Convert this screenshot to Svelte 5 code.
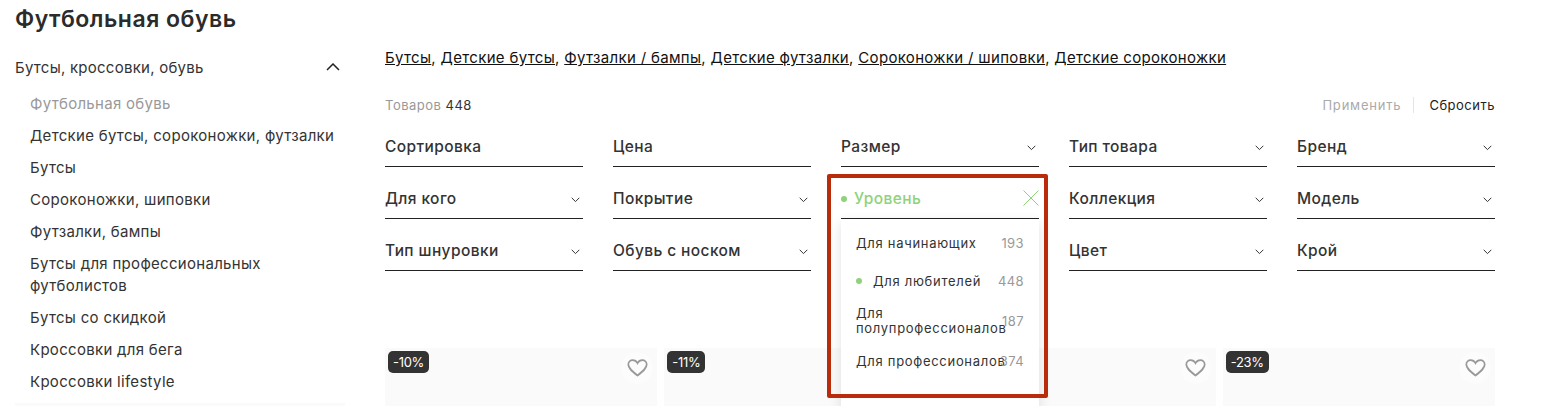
<script>
  const categories = [
    'Детские бутсы, сороконожки, футзалки',
    'Бутсы',
    'Сороконожки, шиповки',
    'Футзалки, бампы',
    'Бутсы для профессиональных футболистов',
    'Бутсы со скидкой',
    'Кроссовки для бега',
    'Кроссовки lifestyle'
  ];
  const links = ['Бутсы', 'Детские бутсы', 'Футзалки / бампы', 'Детские футзалки', 'Сороконожки / шиповки', 'Детские сороконожки'];
  const filters = [
    { name: 'Сортировка', noArrow: true },
    { name: 'Цена', noArrow: true },
    { name: 'Размер' },
    { name: 'Тип товара' },
    { name: 'Бренд' },
    { name: 'Для кого' },
    { name: 'Покрытие' },
    { name: 'Уровень', open: true },
    { name: 'Коллекция' },
    { name: 'Модель' },
    { name: 'Тип шнуровки' },
    { name: 'Обувь с носком' },
    { name: '', blank: true },
    { name: 'Цвет' },
    { name: 'Крой' }
  ];
  const levels = [
    { name: 'Для начинающих', count: 193 },
    { name: 'Для любителей', count: 448, active: true },
    { name: 'Для полупрофессионалов', count: 187 },
    { name: 'Для профессионалов', count: 374 }
  ];
  const products = ['-10%', '-11%', '', '-23%'];
</script>

<div class="page">
  <h1>Футбольная обувь</h1>
  <div class="layout">
    <aside class="sidebar">
      <div class="group-title">
        <span>Бутсы, кроссовки, обувь</span>
        <svg width="14" height="8" viewBox="0 0 14 8"><path d="M1 7l6-6 6 6" fill="none" stroke="#222" stroke-width="1.5" /></svg>
      </div>
      <ul>
        <li class="current">Футбольная обувь</li>
        {#each categories as cat}
          <li>{cat}</li>
        {/each}
      </ul>
      <div class="side-line"></div>
    </aside>

    <main class="main">
      <div class="links">
        {#each links as link, i}
          <span><u>{link}</u>{i < links.length - 1 ? ', ' : ''}</span>
        {/each}
      </div>

      <div class="toolbar">
        <div class="count">Товаров <b>448</b></div>
        <div class="actions">
          <span class="apply">Применить</span>
          <span class="reset">Сбросить</span>
        </div>
      </div>

      <div class="filters">
        {#each filters as f}
          {#if f.blank}
            <div></div>
          {:else}
            <div class="filter" class:open={f.open}>
              {#if f.open}<i class="dot"></i>{/if}
              <span class="filter-name">{f.name}</span>
              {#if f.open}
                <svg class="close" width="16" height="16" viewBox="0 0 16 16"><path d="M.5.5l15 15M15.500.5l-15 15" fill="none" stroke="#8fd27a" stroke-width="1" /></svg>
                <div class="dropdown">
                  {#each levels as l}
                    <div class="level">
                      {#if l.active}<i class="dot level-dot"></i>{/if}
                      <span class="level-name">{l.name}</span>
                      <span class="level-count">{l.count}</span>
                    </div>
                  {/each}
                </div>
              {:else if !f.noArrow}
                <svg class="arrow" width="9" height="6" viewBox="0 0 9 6"><path d="M.7.8l3.800 3.800L8.300.8" fill="none" stroke="#333" stroke-width="1" /></svg>
              {/if}
            </div>
          {/if}
        {/each}
      </div>

      <div class="products">
        {#each products as sale}
          <div class="product">
            {#if sale}<span class="badge">{sale}</span>{/if}
            <span class="fav">
              <svg width="21" height="18" viewBox="0 0 21 18"><path d="M10.500 16.500C4.500 11.800 1.300 9 1.300 5.600 1.300 3 3.300 1.200 5.700 1.200c2 0 3.700 1 4.800 3 1.100-2 2.800-3 4.800-3 2.400 0 4.400 1.800 4.400 4.400 0 3.400-3.200 6.200-9.200 10.900z" fill="none" stroke="#999" stroke-width="1.700" /></svg>
            </span>
          </div>
        {/each}
      </div>
    </main>
  </div>
  <div class="highlight"></div>
</div>

<style>
  :global(body) {
    margin: 0;
    background: #fff;
  }

  .page {
    position: relative;
    height: 406px;
    overflow: hidden;
    font-family: Inter, "Noto Sans", sans-serif;
    color: #222;
  }

  h1 {
    margin: 0;
    padding: 7px 0 0 15px;
    font-size: 23px;
    line-height: 24px;
    font-weight: 600;
    letter-spacing: 0.5px;
    color: #2b2b2b;
  }

  .layout {
    display: flex;
    padding: 0 70px 0 15px;
    gap: 40px;
  }

  .sidebar {
    width: 330px;
    flex: none;
    padding-top: 26px;
  }

  .group-title {
    display: flex;
    justify-content: space-between;
    align-items: center;
    padding-right: 5px;
    height: 20px;
    font-size: 15px;
    letter-spacing: 0.25px;
    color: #333;
  }

  ul {
    list-style: none;
    margin: 16px 0 0;
    padding: 0 0 0 15px;
  }

  li {
    font-size: 15px;
    letter-spacing: 0.3px;
    line-height: 22px;
    margin-bottom: 10px;
    color: #333;
  }

  li.current {
    color: #999;
  }

  .side-line {
    height: 4px;
    background: #fafafa;
  }

  .main {
    flex: 1;
    min-width: 0;
    padding-top: 17px;
  }

  .links {
    font-size: 15px;
    letter-spacing: 0.33px;
    line-height: 20px;
    color: #111;
  }

  .toolbar {
    display: flex;
    justify-content: space-between;
    align-items: center;
    margin-top: 27px;
    height: 20px;
    font-size: 13px;
    letter-spacing: 0.5px;
  }

  .count {
    color: #999;
  }

  .count b {
    font-weight: 400;
    color: #333;
  }

  .actions {
    display: flex;
    align-items: center;
  }

  .apply {
    color: #aaa;
    letter-spacing: 0.8px;
    padding-right: 12px;
    border-right: 1px solid #e5e5e5;
    margin-right: 15px;
  }

  .filters {
    display: grid;
    grid-template-columns: repeat(5, 1fr);
    column-gap: 30px;
    margin-top: 1px;
  }

  .filter {
    position: relative;
    display: flex;
    align-items: flex-end;
    height: 51px;
    box-sizing: border-box;
    margin-bottom: 1px;
    border-bottom: 1px solid #222;
    font-size: 15.500px;
    letter-spacing: 0.4px;
    font-weight: 500;
    color: #333;
  }

  .filter-name {
    flex: 1;
    line-height: 20px;
    padding-bottom: 9px;
  }

  .arrow {
    margin: 0 3px 15px 0;
  }

  .open {
    color: #8fd27a;
  }

  .dot {
    width: 6px;
    height: 6px;
    border-radius: 50%;
    background: #8fd27a;
    flex: none;
    margin-right: 7px;
    margin-bottom: 16px;
  }

  .close {
    margin-bottom: 12px;
  }

  .dropdown {
    position: absolute;
    z-index: 2;
    left: 0;
    right: 0;
    top: 51px;
    height: 190px;
    padding: 5px 15px 0;
    box-sizing: border-box;
    background: #fff;
    box-shadow: 0 4px 12px rgba(0, 0, 0, 0.12);
    font-size: 13px;
    letter-spacing: 0.7px;
    font-weight: 400;
    color: #333;
  }

  .level {
    display: flex;
    align-items: center;
    min-height: 38px;
    padding: 6px 0;
    box-sizing: border-box;
    line-height: 15px;
  }

  .level-dot {
    margin: 0 11px 0 0;
  }

  .level-name {
    flex: 1;
    min-width: 0;
  }

  .level-count {
    color: #999;
    flex: none;
    width: 16px;
    display: flex;
    justify-content: flex-end;
    letter-spacing: 0.4px;
  }

  .products {
    display: grid;
    grid-template-columns: repeat(4, 1fr);
    column-gap: 7px;
    margin-top: 76px;
  }

  .product {
    position: relative;
    height: 120px;
    background: #fafafa;
  }

  .badge {
    position: absolute;
    left: 3px;
    top: 3px;
    padding: 0 5px;
    height: 22px;
    line-height: 22px;
    border-radius: 5px;
    background: #333;
    color: #fff;
    font-size: 13px;
    letter-spacing: -0.3px;
  }

  .fav {
    position: absolute;
    right: 4px;
    top: 4px;
    width: 32px;
    height: 32px;
    border-radius: 50%;
    background: #fcfcfc;
    display: flex;
    align-items: center;
    justify-content: center;
  }

  .highlight {
    position: absolute;
    z-index: 3;
    left: 827px;
    top: 174px;
    width: 213px;
    height: 216px;
    border: 4px solid #b82c0c;
    border-radius: 2px;
  }
</style>
